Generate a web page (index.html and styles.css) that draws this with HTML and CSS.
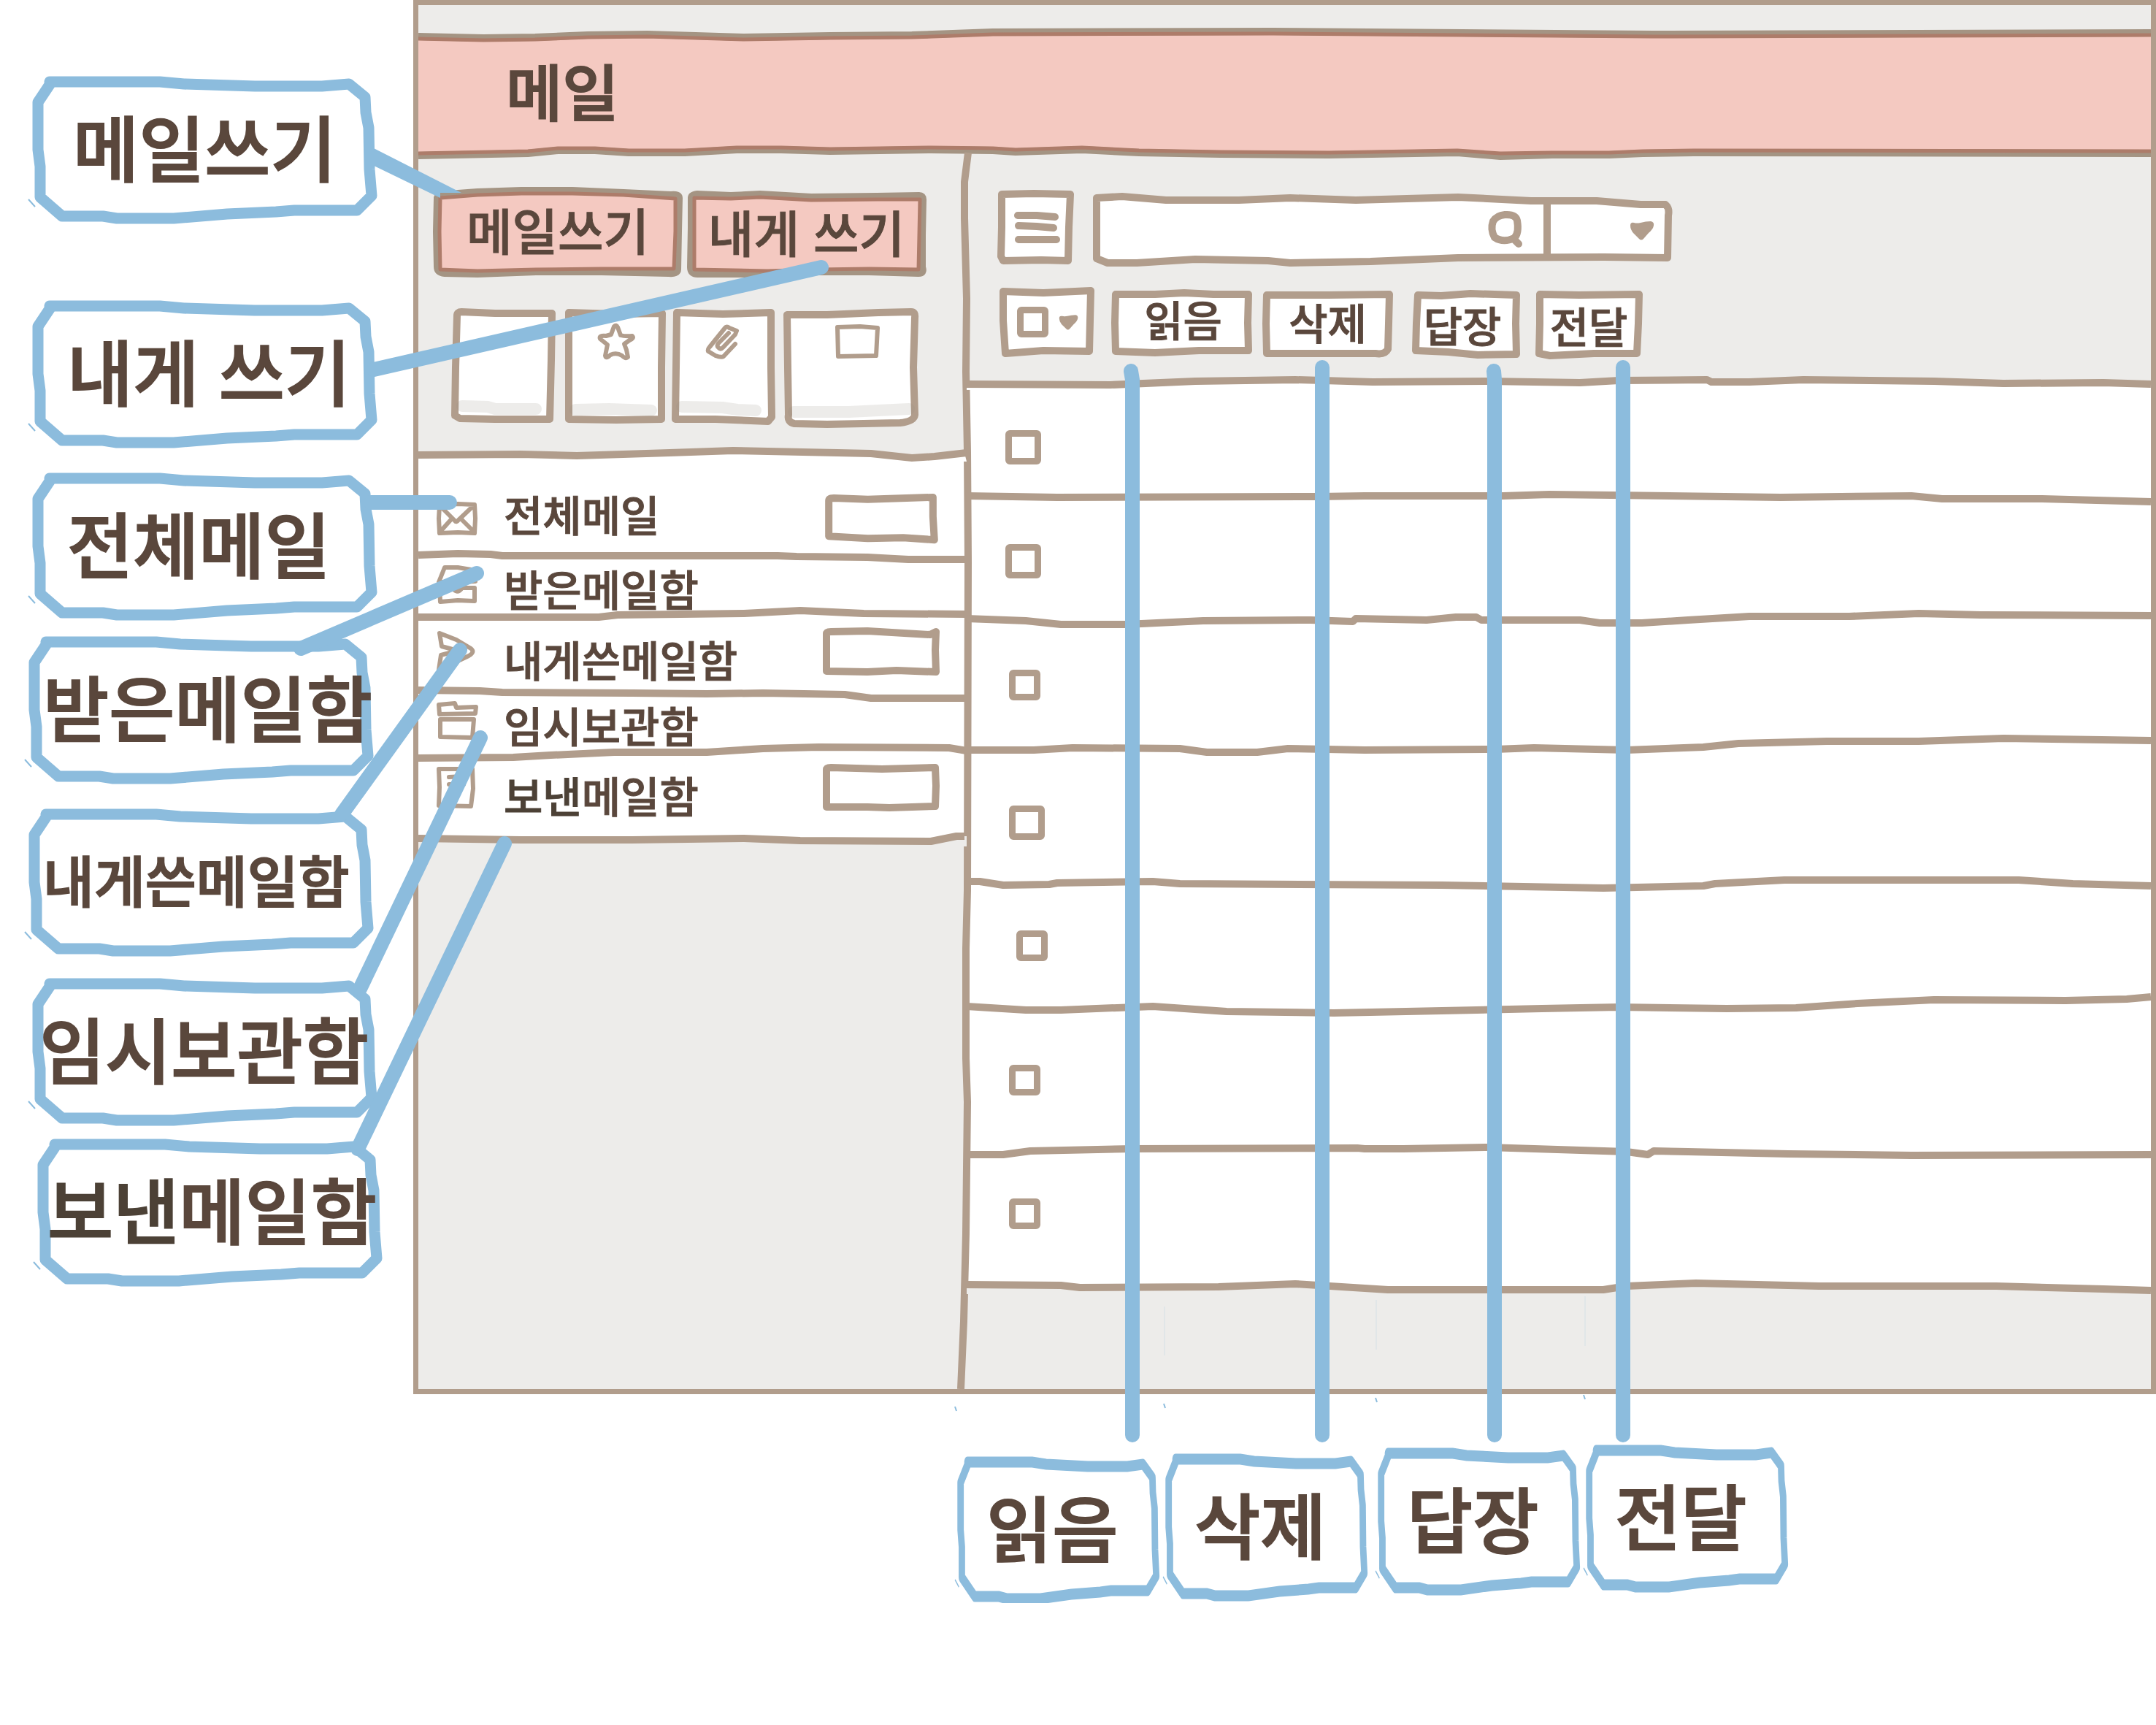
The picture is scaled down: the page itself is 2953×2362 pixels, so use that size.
FILE: index.html
```html
<!DOCTYPE html>
<html lang="ko">
<head>
<meta charset="utf-8">
<meta name="viewport" content="width=device-width, initial-scale=1">
<title>메일</title>
<link rel="stylesheet" href="styles.css">
</head>
<body>
<svg class="defs" aria-hidden="true">
  <symbol id="callout-frame" viewBox="0 0 474 200" preserveAspectRatio="none">
    <path d="M24 7 175 7 208 10 305 13 397 13 434 10 456 28 457 49 461 70 462 127 465 163 445 183 359 183 334 185 267 188 194 194 116 194 97 191 41 191 11 165 11 123 8 100 8 35 26 8Z" fill="#fff" stroke="#8cbcdd" stroke-width="15" stroke-linejoin="round"/>
    <path d="M-5 168 4 178" fill="none" stroke="#8cbcdd" stroke-width="2"/>
  </symbol>
  <symbol id="heart" viewBox="0 0 34 26">
    <path d="M1 6Q1 1 6 2Q10 3 15 2Q22 0 29 0Q34 1 33 6Q32 11 26 16L19 24Q16 27 13 24L5 16Q1 11 1 6Z" fill="#b19d8c"/>
  </symbol>
</svg>

<div class="page">
  <aside class="side-callouts" aria-label="메뉴 설명">
    <div class="callout callout--inset-l"><svg class="callout__frame" aria-hidden="true"><use href="#callout-frame"/></svg><span>메일쓰기</span></div>
    <div class="callout callout--inset-m"><svg class="callout__frame" aria-hidden="true"><use href="#callout-frame"/></svg><span>내게 쓰기</span></div>
    <div class="callout callout--inset-m"><svg class="callout__frame" aria-hidden="true"><use href="#callout-frame"/></svg><span>전체메일</span></div>
    <div class="callout callout--left"><svg class="callout__frame" aria-hidden="true"><use href="#callout-frame"/></svg><span>받은메일함</span></div>
    <div class="callout callout--left callout--small"><svg class="callout__frame" aria-hidden="true"><use href="#callout-frame"/></svg><span>내게쓴메일함</span></div>
    <div class="callout callout--tight"><svg class="callout__frame" aria-hidden="true"><use href="#callout-frame"/></svg><span>임시보관함</span></div>
    <div class="callout callout--right"><svg class="callout__frame" aria-hidden="true"><use href="#callout-frame"/></svg><span><span class="ink-dark">보낸</span>메일함</span></div>
  </aside>

  <div class="app">
    <header class="header">
      <svg class="header__art" viewBox="0 0 2373 160" preserveAspectRatio="none" aria-hidden="true">
        <path class="fill-pink" d="M0 1 89 3 160 2 232 -1 314 -2 446 2 564 0 676 -1 732 -3 787 -5 1170 -6 1690 -2 2373 -4V161L1747 160 1677 161 1631 163 1553 163 1482 165 1423 160 1247 163 1098 162 987 160 909 156 818 159 787 157 702 156 564 158 497 156 436 156 365 160 288 160 242 157 191 157 150 161 0 164Z"/>
        <path class="edge-outer" d="M0 1 89 3 160 2 232 -1 314 -2 446 2 564 0 676 -1 732 -3 787 -5 1170 -6 1690 -2 2373 -4"/>
        <path class="edge-inner" d="M0 4 89 6 160 5 232 2 314 1 446 5 564 3 676 2 732 0 787 -2 1170 -3 1690 1 2373 -1"/>
        <path class="edge-outer" d="M0 164 150 161 191 157 242 157 288 160 365 160 436 156 497 156 564 158 702 156 787 157 818 159 909 156 987 160 1098 162 1247 163 1423 160 1482 165 1553 163 1631 163 1677 161 1747 160 2373 161"/>
        <path class="edge-inner" d="M0 161 150 158 191 154 242 154 288 157 365 157 436 153 497 153 564 155 702 153 787 154 818 156 909 153 987 157 1098 159 1247 160 1423 157 1482 161 1553 160 1631 160 1677 158 1747 157 2373 158"/>
      </svg>
      <h1 class="header__title">메일</h1>
    </header>

    <div class="columns">
      <nav class="sidebar" aria-label="메일함">
        <svg class="sidebar__edge" viewBox="0 0 20 1693" preserveAspectRatio="none" aria-hidden="true"><path class="line" d="M12 0 7 40 7 90 10 200 9 300 11 410 12 560 11 1010 9 1090 9 1240 11 1300 9 1480 6 1600 2 1693"/></svg>

        <section class="compose">
          <div class="compose__buttons">
            <button class="write write--mail" type="button">
              <svg class="art" viewBox="0 0 340 122" aria-hidden="true"><path class="fill-pink edge-outer" d="M5 14Q6 9 20 9L60 6 120 4 190 4 260 7 325 10Q336 9 336 14L335 60 334 112Q334 118 322 117L230 115 140 115 60 118 15 117Q5 116 5 108L4 60Z"/><path class="edge-inner" d="M9 14 60 10 120 8 190 8 260 10 331 15 331 60 329 111 230 111 140 112 60 114 9 112 8 60Z"/></svg>
              <span>메일쓰기</span></button>
            <button class="write write--self" type="button">
              <svg class="art" viewBox="0 0 327 118" aria-hidden="true"><path class="fill-pink edge-outer" d="M6 9Q6 5 14 4L60 6 100 4 170 8 260 7 318 6Q323 6 323 11L322 60 322 104Q325 112 317 112L250 110 180 110 110 113 16 113Q5 114 5 104L6 50Z"/><path class="edge-inner" d="M10 9 60 10 100 8 170 12 260 11 319 11 318 60 317 107 250 106 180 107 110 109 10 107 10 50Z"/></svg>
              <span>내게 쓰기</span></button>
          </div>
          <div class="filters">
            <button class="filter" type="button" aria-label="안읽음">
              <svg class="art" viewBox="0 0 145 157"><path class="line fill-white" d="M8 9Q8 4 14 4L60 6 138 6 137 70 135 151 60 151 12 150 5 146 6 80Z"/><path class="shade" d="M15 133 50 134 60 137 116 137"/></svg></button>
            <button class="filter" type="button" aria-label="중요">
              <svg class="art" viewBox="0 0 135 157"><path class="line fill-white" d="M5 5 70 7 133 6 132 80 132 151 70 152 5 151 5 80Z"/><path class="shade" d="M14 138 60 137 118 139"/><path class="icon-line" d="M67 24Q70 21 72 25L76 36Q82 38 92 37Q95 40 88 43L81 48 84 56 86 66Q83 69 78 64Q70 59 62 63Q56 69 55 64L58 49 48 41Q46 36 56 37L63 35Z"/></svg></button>
            <button class="filter" type="button" aria-label="첨부">
              <svg class="art" viewBox="0 0 142 157"><path class="line fill-white" d="M7 5 70 7 136 5 136 80 137 148 132 154 60 151 5 151 6 80Z"/><path class="shade" d="M14 134 70 135 90 138 115 139"/><path class="icon-line" d="M87 48 71 65Q68 67 60 64L50 58Q49 55 52 52L73 26Q75 23 79 26L89 30 87 35 70 53Q67 56 64 53Q61 51 64 47L78 33"/></svg></button>
            <button class="filter" type="button" aria-label="내게쓴">
              <svg class="art" viewBox="0 0 185 162"><path class="line fill-white" d="M5 8 60 8 130 5 175 4Q181 4 180 12L178 80 180 145Q179 154 160 156L60 158 15 157Q5 155 7 145L6 80Z"/><path class="shade" d="M14 141 90 141 130 139 172 137"/><path class="icon-line" d="M74 25 105 24 129 26 127 64 75 65Z"/></svg></button>
          </div>
          <svg class="rule rule--compose" viewBox="0 0 751 20" preserveAspectRatio="none" aria-hidden="true"><path class="fill-white" d="M0 11 140 10 217 12 344 8 431 5 574 8 620 9 676 15 707 13 748 8 751 20 0 20Z"/><path class="line" d="M0 11 140 10 217 12 344 8 431 5 574 8 620 9 676 15 707 13 751 8"/></svg>
        </section>

        <ul class="boxes">
          <li class="box box--first">
            <svg class="box__icon" viewBox="0 0 58 48" aria-hidden="true"><path class="icon-line" d="M5 6 30 4 53 5 54 24 53 44 30 43 5 44 4 24ZM6 7 26 27Q28 30 31 26L52 6M5 43 22 24M53 43 34 24"/></svg>
            <a class="box__name" href="#all">전체메일</a>
            <span class="count"><svg class="art" viewBox="0 0 158 68"><path class="line" d="M5 8Q5 4 12 4L60 6 152 3 152 30 154 63 110 60 60 61 5 58 5 30Z"/></svg></span>
            <svg class="rule" viewBox="0 0 751 20" preserveAspectRatio="none"><path class="line" d="M0 7 54 5 99 6 115 8 253 8 492 8 518 9 615 10 671 13 751 13"/></svg>
          </li>
          <li class="box box--slim">
            <svg class="box__icon" viewBox="0 0 58 56" aria-hidden="true"><path class="icon-line" d="M4 24 12 4 30 4 48 7 54 23 38 24Q30 37 22 24ZM5 31 22 31Q29 42 36 32L53 32 53 50 30 49 6 51Z"/></svg>
            <a class="box__name" href="#inbox">받은메일함</a>
            <svg class="rule" viewBox="0 0 751 20" preserveAspectRatio="none"><path class="line" d="M0 12 247 12 273 9 446 7 523 3 610 7 751 8"/></svg>
          </li>
          <li class="box box--tall">
            <svg class="box__icon" viewBox="0 0 58 56" aria-hidden="true"><path class="icon-line" d="M5 3 28 12 48 24Q54 29 45 34L24 44 4 53 7 33 30 27 8 21Z"/></svg>
            <a class="box__name" href="#self">내게쓴메일함</a>
            <span class="count"><svg class="art" viewBox="0 0 158 66"><path class="line" d="M4 8Q4 5 10 5L60 4 146 9 154 5 153 30 154 60 100 58 60 60 4 59Z"/></svg></span>
            <svg class="rule" viewBox="0 0 751 20" preserveAspectRatio="none"><path class="line" d="M0 5 84 6 115 8 293 9 395 10 472 9 584 11 620 16 751 16"/></svg>
          </li>
          <li class="box box--slim">
            <svg class="box__icon" viewBox="0 0 58 56" aria-hidden="true"><path class="icon-line" d="M4 5 26 3 28 9 55 8 54 17 5 18ZM6 25 52 25 50 50 6 49Z"/></svg>
            <a class="box__name" href="#drafts">임시보관함</a>
            <svg class="rule" viewBox="0 0 751 20" preserveAspectRatio="none"><path class="line" d="M0 18 130 17 181 14 268 10 395 10 472 5 548 3 727 4 751 8"/></svg>
          </li>
          <li class="box box--last">
            <svg class="box__icon" viewBox="0 0 58 56" aria-hidden="true"><path class="icon-line" d="M4 3 50 3 51 30 48 54 4 53 5 28ZM18 14 38 13M18 24 38 24"/></svg>
            <a class="box__name" href="#sent"><span class="ink-dark">보낸</span>메일함</a>
            <span class="count"><svg class="art" viewBox="0 0 158 66"><path class="line" d="M4 8Q4 5 10 5L80 7 153 5 154 30 153 58 90 60 60 59 4 59Z"/></svg></span>
            <svg class="rule" viewBox="0 0 751 20" preserveAspectRatio="none"><path class="fill-gray" d="M0 9 140 11 293 11 446 9 523 12 702 13 737 6 751 6V20H0Z"/><path class="line" d="M0 9 140 11 293 11 446 9 523 12 702 13 737 6 748 6"/></svg>
          </li>
        </ul>
      </nav>

      <main class="main">
        <div class="toolbar">
          <div class="toolbar__row toolbar__row--search">
            <button class="menu" type="button" aria-label="메뉴">
              <svg class="art" viewBox="0 0 104 101"><path class="line fill-white" d="M6 5 50 4 100 5 98 50 97 96 60 95 8 96 5 90 6 50Z"/><path class="bars" d="M28 34 54 34 79 36M29 48 54 49 77 51M29 67 81 67"/></svg></button>
            <form class="search" role="search">
              <svg class="art" viewBox="0 0 793 99" aria-hidden="true"><path class="line fill-white" d="M5 6 40 4 100 9 200 9 270 6 360 9 500 5 600 10 690 10 750 15 784 15Q790 20 788 30L787 88 700 87 500 88 380 93 270 95 240 92 140 90 60 95 20 95 5 89ZM622 12V86"/></svg>
              <input class="search__input" type="search" aria-label="메일 검색">
              <button class="search__go" type="submit" aria-label="검색"><svg width="52" height="52" viewBox="0 0 52 52"><path class="glass" d="M26 5Q41 4 43 13 46 30 39 37 24 44 12 36 6 25 10 14 15 6 26 5ZM38 38 45 45"/></svg></button>
              <select class="search__scope" aria-label="검색 범위"><option></option></select>
              <svg class="search__heart" width="34" height="26" aria-hidden="true"><use href="#heart"/></svg>
            </form>
          </div>
          <div class="toolbar__row toolbar__row--actions">
            <div class="pick">
              <svg class="art" viewBox="0 0 129 94" aria-hidden="true"><path class="line fill-white" d="M5 5 60 7 125 4 124 45 123 87 60 86 8 90 5 45Z"/></svg>
              <input class="tick" type="checkbox" aria-label="전체 선택">
              <button class="pick__more" type="button" aria-label="선택 옵션"><svg width="27" height="21"><use href="#heart"/></svg></button>
            </div>
            <button class="action action--read" type="button"><svg class="art" viewBox="0 0 193 90" aria-hidden="true"><path class="line fill-white" d="M6 6 60 6 100 4 140 6 188 6 187 45 188 83 120 83 60 86 6 84 5 45Z"/></svg><span>읽음</span></button>
            <button class="action action--delete" type="button"><svg class="art" viewBox="0 0 179 90" aria-hidden="true"><path class="line fill-white" d="M6 6 90 6 174 5 173 45 172 80Q168 88 155 86L60 86 6 86 5 45Z"/></svg><span>삭제</span></button>
            <button class="action action--reply" type="button"><svg class="art" viewBox="0 0 148 92" aria-hidden="true"><path class="line fill-white" d="M8 6 40 7 80 4 143 6 142 45 143 87 90 88 50 84 5 82 6 45Z"/></svg><span>답장</span></button>
            <button class="action action--forward" type="button"><svg class="art" viewBox="0 0 146 94" aria-hidden="true"><path class="line fill-white" d="M6 5 60 6 142 5 141 45 139 86 80 86 20 89 5 86 6 45Z"/></svg><span>전달</span></button>
          </div>
          <svg class="rule" viewBox="0 0 1622 20" preserveAspectRatio="none" aria-hidden="true"><path class="fill-white" d="M0 12 197 13 313 8 450 6 556 9 714 8 840 10 893 7 1014 6 1020 9 1072 9 1146 6 1325 8 1420 11 1557 10 1622 12V20H0Z"/><path class="line" d="M0 12 197 13 313 8 450 6 556 9 714 8 840 10 893 7 1014 6 1020 9 1072 9 1146 6 1325 8 1420 11 1557 10 1622 12"/></svg>
        </div>

        <ul class="mails">
          <li class="mail mail--1"><input class="tick tick--l" type="checkbox" aria-label="메일 1 선택"><svg class="rule" viewBox="0 0 1622 20" preserveAspectRatio="none"><path class="line" d="M0 9 124 11 482 10 545 9 735 9 798 7 883 8 1115 11 1294 9 1336 13 1473 13 1622 17"/></svg></li>
          <li class="mail mail--2"><input class="tick tick--l" type="checkbox" aria-label="메일 2 선택"><svg class="rule" viewBox="0 0 1622 20" preserveAspectRatio="none"><path class="line" d="M0 7 81 10 129 15 218 15 324 10 471 9 529 11 533 7 630 9 670 5 698 5 705 9 840 9 867 13 925 13 988 9 1072 4 1209 4 1304 0 1389 2 1622 3"/></svg></li>
          <li class="mail mail--3"><input class="tick" type="checkbox" aria-label="메일 3 선택"><svg class="rule" viewBox="0 0 1622 20" preserveAspectRatio="none"><path class="line" d="M0 12 92 12 145 9 292 10 329 15 398 15 440 10 545 12 724 11 777 9 904 12 1009 8 1057 3 1178 0 1304 0 1420 -4 1622 -1"/></svg></li>
          <li class="mail mail--4"><input class="tick tick--l" type="checkbox" aria-label="메일 4 선택"><svg class="rule" viewBox="0 0 1622 20" preserveAspectRatio="none"><path class="line" d="M0 7 18 7 50 12 113 11 124 9 255 7 292 10 651 12 872 16 1009 13 1025 10 1120 5 1441 5 1515 10 1622 13"/></svg></li>
          <li class="mail mail--5"><input class="tick" type="checkbox" aria-label="메일 5 선택"><svg class="rule" viewBox="0 0 1622 20" preserveAspectRatio="none"><path class="line" d="M0 8 81 13 129 13 255 8 356 15 503 17 651 14 788 11 893 9 1041 11 1136 10 1220 4 1325 -1 1505 0 1589 -2 1622 -5"/></svg></li>
          <li class="mail mail--6"><input class="tick" type="checkbox" aria-label="메일 6 선택"><svg class="rule" viewBox="0 0 1622 20" preserveAspectRatio="none"><path class="line" d="M0 14 50 14 87 9 229 6 535 5 545 6 598 6 714 4 904 10 933 14 941 9 988 10 1125 13 1294 15 1622 14"/></svg></li>
          <li class="mail mail--7"><input class="tick" type="checkbox" aria-label="메일 7 선택"><svg class="rule" viewBox="0 0 1622 20" preserveAspectRatio="none"><path class="fill-gray" d="M0 7 129 8 155 11 345 10 450 6 577 14 872 14 904 9 999 5 1167 9 1410 9 1557 13 1622 15V20H0Z"/><path class="line" d="M0 7 129 8 155 11 345 10 450 6 577 14 872 14 904 9 999 5 1167 9 1410 9 1557 13 1622 15"/></svg></li>
        </ul>
      </main>
    </div>
  </div>

  <aside class="bottom-callouts" aria-label="도구 설명">
    <div class="callout callout--drop-3"><svg class="callout__frame" aria-hidden="true"><use href="#callout-frame"/></svg><span>읽음</span></div>
    <div class="callout callout--drop-2"><svg class="callout__frame" aria-hidden="true"><use href="#callout-frame"/></svg><span>삭제</span></div>
    <div class="callout callout--drop-1"><svg class="callout__frame" aria-hidden="true"><use href="#callout-frame"/></svg><span>답장</span></div>
    <div class="callout"><svg class="callout__frame" aria-hidden="true"><use href="#callout-frame"/></svg><span>전달</span></div>
  </aside>

  <svg class="connectors" width="2460" height="2200" viewBox="0 0 2460 2200" aria-hidden="true">
    <path fill="#8cbcdd" d="M508 201 632 264H603V271L508 225Z"/>
    <path class="link" d="M512 506 1125 366M508 688H616M412 888 653 785M468 1115 630 890M493 1354 658 1010M490 1573 691 1155"/>
    <path class="link" d="M1549 508 1551 520V1965M1811 503V1965M2046 508 2047 520V1965M2223 503V1965"/>
    <path class="speck" d="M1308 1926 1310 1932M1594 1922 1596 1928M1884 1914 1886 1920M2169 1910 2171 1916"/>
    <path class="hairline" d="M1595 1789V1856M1885 1780V1848M2171 1775V1843"/>
  </svg>
</div>
</body>
</html>
```

FILE: styles.css
```css
:root {
  --brown: #b19d8c;
  --ink: #5a473c;
  --gray: #edecea;
  --pink: #f4c9c1;
  --blue: #8cbcdd;
}

* {
  box-sizing: border-box;
}

body {
  margin: 0;
  background: #fff;
  color: var(--ink);
  font-family: "Noto Sans CJK KR", sans-serif;
  font-weight: 500;
  -webkit-text-stroke: 1px currentColor;
}

ul {
  margin: 0;
  padding: 0;
  list-style: none;
}

a {
  color: inherit;
  text-decoration: none;
}

button,
input,
select {
  margin: 0;
  padding: 0;
  border: 0;
  background: none;
  color: inherit;
  font: inherit;
  appearance: none;
}

svg,
symbol {
  overflow: visible;
}

.defs {
  position: absolute;
  width: 0;
  height: 0;
}

/* pen strokes */
.line,
.edge-outer,
.edge-inner,
.icon-line,
.bars,
.glass {
  fill: none;
  stroke: var(--brown);
  stroke-width: 10px;
  stroke-linejoin: round;
  vector-effect: non-scaling-stroke;
}

.edge-outer {
  stroke: #a49483;
}

.edge-inner {
  stroke: #ad7c6a;
  stroke-width: 5px;
}

.icon-line {
  stroke-width: 6px;
  stroke-linecap: round;
}

.bars,
.glass {
  stroke-linecap: round;
}

.shade {
  fill: none;
  stroke: #968c82;
  stroke-opacity: 0.17;
  stroke-width: 16px;
  stroke-linecap: round;
}

.fill-white {
  fill: #fff;
}

.fill-gray {
  fill: var(--gray);
}

.fill-pink {
  fill: var(--pink);
}

.ink-dark {
  color: #4c4136;
}

/* page */
.page {
  position: relative;
  display: grid;
  grid-template-columns: 566px minmax(0, 1fr);
}

.connectors {
  position: absolute;
  top: 0;
  left: 0;
  z-index: 2;
  pointer-events: none;
}

.link {
  fill: none;
  stroke: var(--blue);
  stroke-width: 20px;
  stroke-linecap: round;
}

.speck {
  stroke: var(--blue);
  stroke-width: 2px;
}

.hairline {
  stroke: #d5e0e6;
  stroke-width: 1px;
}

/* callouts */
.side-callouts {
  display: grid;
  grid-template-rows: 307px 236px 224px 236px 232px 220px 200px;
  align-content: start;
  padding: 105px 0 0 44px;
}

.callout {
  position: relative;
  display: flex;
  align-items: center;
  width: 474px;
  height: 200px;
  padding-bottom: 14px;
  font-size: 98px;
  line-height: 1;
  white-space: nowrap;
  -webkit-text-stroke-width: 2px;
}

.callout span {
  position: relative;
  z-index: 3;
}

.callout__frame {
  position: absolute;
  inset: 0;
  width: 100%;
  height: 100%;
}

.callout--inset-l {
  padding-left: 56px;
}

.callout--inset-m {
  padding-left: 48px;
}

.callout--left {
  margin-left: -5px;
  padding-left: 20px;
}

.callout--small {
  padding-bottom: 10px;
  font-size: 76px;
}

.callout--tight {
  padding-left: 10px;
}

.callout--right {
  margin-left: 7px;
  padding-left: 14px;
}

.bottom-callouts {
  grid-column: 1 / -1;
  display: grid;
  grid-template-columns: 285px 291px 285px 278px;
  padding: 70px 0 0 1311px;
}

.bottom-callouts .callout {
  width: 278px;
  padding-left: 40px;
}

.callout--drop-1 {
  margin-top: 4px;
}

.callout--drop-2 {
  margin-top: 12px;
}

.callout--drop-3 {
  margin-top: 16px;
}

/* application window */
.app {
  border: 7px solid var(--brown);
  background: var(--gray);
}

.header {
  position: relative;
  display: flex;
  align-items: center;
  height: 160px;
  margin-top: 42px;
  padding: 0 0 12px 120px;
}

.header__art {
  position: absolute;
  inset: 0;
  width: 100%;
  height: 100%;
}

.header__title {
  position: relative;
  margin: 0;
  font-size: 84px;
  font-weight: 500;
  line-height: 1;
  -webkit-text-stroke-width: 2px;
}

.columns {
  display: grid;
  grid-template-columns: 751px minmax(0, 1fr);
}

.rule {
  position: absolute;
  bottom: -10px;
  left: 0;
  z-index: 1;
  width: 100%;
  height: 20px;
}

.art {
  position: absolute;
  inset: 0;
  z-index: 0;
  width: 100%;
  height: 100%;
}

/* sidebar */
.sidebar {
  position: relative;
}

.sidebar__edge {
  position: absolute;
  top: 0;
  right: -10px;
  z-index: 1;
  width: 20px;
  height: 100%;
}

.compose {
  position: relative;
  height: 413px;
  padding: 48px 56px 0 21px;
}

.compose__buttons {
  display: flex;
  gap: 7px;
}

.write {
  position: relative;
  padding-bottom: 8px;
  font-size: 68px;
  line-height: 1;
}

.write span,
.action span {
  position: relative;
}

.write--mail {
  width: 340px;
  height: 122px;
}

.write--self {
  width: 327px;
  height: 118px;
  margin-top: 5px;
}

.filters {
  display: grid;
  grid-template-columns: 145px 135px 142px 185px;
  gap: 11px;
  align-items: start;
  padding: 43px 0 0 24px;
}

.filter {
  position: relative;
  height: 157px;
}

.filter:last-child {
  height: 162px;
}

.box {
  position: relative;
  display: grid;
  grid-template-columns: 58px 1fr 158px;
  column-gap: 35px;
  align-items: start;
  padding: 0 38px 0 24px;
  background: #fff;
  font-size: 58px;
  line-height: 50px;
}

.box__icon {
  width: 58px;
  height: 56px;
}

.count {
  position: relative;
  height: 66px;
}

.box--first {
  height: 141px;
  padding-top: 56px;
}

.box--first .box__icon {
  height: 48px;
  margin-top: 8px;
}

.box--slim {
  height: 80px;
  padding-top: 10px;
}

.box--slim .box__name {
  margin-top: 7px;
}

.box--tall {
  height: 107px;
  padding-top: 17px;
}

.box--tall .box__name,
.box--last .box__name {
  margin-top: 17px;
}

.box--tall .box__icon,
.box--last .box__icon {
  margin-top: 4px;
}

.box--last {
  height: 119px;
  padding-top: 16px;
}

/* toolbar */
.toolbar {
  position: relative;
  height: 315px;
  padding: 52px 40px 0 42px;
}

.toolbar__row {
  display: flex;
  align-items: flex-start;
}

.toolbar__row--search {
  gap: 27px;
  height: 133px;
}

.toolbar__row--actions {
  padding-left: 3px;
}

.menu {
  position: relative;
  width: 104px;
  height: 101px;
}

.search {
  position: relative;
  display: flex;
  align-items: center;
  width: 793px;
  height: 99px;
  margin-top: 4px;
}

.search__input {
  position: relative;
  width: 538px;
  height: 80px;
  padding-left: 24px;
  font-size: 58px;
}

.search__go {
  position: relative;
  width: 84px;
  height: 58px;
  text-align: left;
}

.search__go svg {
  display: block;
}

.search__scope {
  position: relative;
  width: 171px;
  height: 80px;
}

.search__heart {
  position: absolute;
  top: 38px;
  right: 24px;
  pointer-events: none;
}

.pick {
  position: relative;
  display: flex;
  align-items: center;
  gap: 14px;
  width: 129px;
  height: 94px;
  padding-left: 24px;
}

.tick {
  position: relative;
  width: 43px;
  height: 42px;
  border: 9px solid var(--brown);
  border-radius: 6px;
}

.tick--l {
  width: 49px;
  height: 47px;
}

.pick__more {
  position: relative;
  width: 27px;
  height: 21px;
}

.pick__more svg {
  display: block;
}

.action {
  position: relative;
  padding-bottom: 6px;
  font-size: 58px;
  line-height: 1;
}

.action--read {
  width: 193px;
  height: 90px;
  margin: 3px 0 0 24px;
  padding: 0 0 12px 4px;
}

.action--delete {
  width: 179px;
  height: 90px;
  margin: 4px 0 0 14px;
}

.action--reply {
  width: 148px;
  height: 92px;
  margin: 4px 0 0 26px;
  padding: 0 10px 0 0;
}

.action--forward {
  width: 146px;
  height: 94px;
  margin: 4px 0 0 21px;
  padding: 0;
}

/* mail list */
.mails {
  padding-bottom: 140px;
}

.mail {
  position: relative;
  display: flex;
  align-items: center;
  padding-left: 58px;
  background: #fff;
}

.mail--1 {
  height: 156px;
  padding: 20px 0 0 53px;
}

.mail--2 {
  height: 170px;
  padding: 6px 0 0 53px;
}

.mail--3 {
  height: 175px;
}

.mail--4 {
  height: 185px;
  padding-top: 18px;
}

.mail--5 {
  height: 170px;
  padding-left: 68px;
}

.mail--6 {
  height: 197px;
}

.mail--7 {
  height: 185px;
  padding-bottom: 16px;
}
```
